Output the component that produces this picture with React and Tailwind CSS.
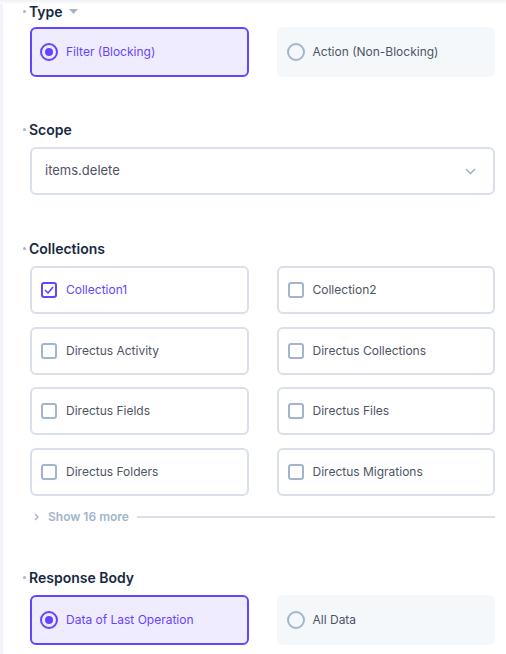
import React from 'react';

const Label = ({ children, caret }) => (
    <div className="flex items-center h-5 text-[14px] font-semibold text-[#172940]">
        <span className="w-[3px] h-[3px] rounded-full bg-[#a2b5cd] mr-[3px] -ml-[7px]"></span>
        {children}
        {caret && (
            <svg className="ml-[6px]" width="9" height="5" viewBox="0 0 9 5">
                <path d="M0 0h9L4.5 5z" fill="#a2b5cd" />
            </svg>
        )}
    </div>
);

const Radio = ({ label, active }) => (
    <div
        className={
            active
                ? 'flex items-center h-[50px] px-[8px] rounded-md border-2 border-[#6644ff] bg-[#f0ecff] text-[#6644ff]'
                : 'flex items-center h-[50px] px-[10px] rounded-md bg-[#f5f8fb] text-[#4f5464]'
        }
    >
        {active ? (
            <span className="w-[18px] h-[18px] rounded-full border-2 border-[#6644ff] flex items-center justify-center">
                <span className="w-[8px] h-[8px] rounded-full bg-[#6644ff]"></span>
            </span>
        ) : (
            <span className="w-[18px] h-[18px] rounded-full border-2 border-[#a2b5cd]"></span>
        )}
        <span className="ml-[8px] text-[12px]">{label}</span>
    </div>
);

const Check = ({ label, active }) => (
    <div className="flex items-center h-[48px] px-[9px] rounded-md border-2 border-[#d9e0ea] bg-white">
        {active ? (
            <span className="w-[16px] h-[16px] rounded-[3px] border-2 border-[#6644ff] flex items-center justify-center">
                <svg width="10" height="8" viewBox="0 0 10 8">
                    <path d="M1 4l3 3 5-6" fill="none" stroke="#6644ff" strokeWidth="1.6" />
                </svg>
            </span>
        ) : (
            <span className="w-[16px] h-[16px] rounded-[3px] border-2 border-[#a2b5cd]"></span>
        )}
        <span className={'ml-[9px] text-[12px] ' + (active ? 'text-[#6644ff]' : 'text-[#4f5464]')}>{label}</span>
    </div>
);

const collections = [
    ['Collection1', true],
    ['Collection2', false],
    ['Directus Activity', false],
    ['Directus Collections', false],
    ['Directus Fields', false],
    ['Directus Files', false],
    ['Directus Folders', false],
    ['Directus Migrations', false],
];

export default function App() {
    return (
        <div
            className="relative w-[506px] h-[654px] overflow-hidden bg-white flex"
            style={{ fontFamily: 'Inter, "Noto Sans", sans-serif' }}
        >
            {/* top shadow */}
            <div className="absolute top-0 left-0 right-0 h-[4px] bg-gradient-to-b from-[#eef1f5] to-white"></div>
            {/* left strip */}
            <div className="w-[3px] bg-[#f0f4f9] shrink-0"></div>

            <div className="flex-1 pl-[27px] pr-[11px] pt-[1px]">
                {/* Type */}
                <Label caret>Type</Label>
                <div className="mt-[6px] grid grid-cols-2 gap-x-[28px]">
                    <Radio label="Filter (Blocking)" active />
                    <Radio label="Action (Non-Blocking)" />
                </div>

                {/* Scope */}
                <div className="mt-[42px]">
                    <Label>Scope</Label>
                    <div className="mt-[8px] h-[48px] flex items-center justify-between px-[13px] rounded-md border-2 border-[#d9e0ea]">
                        <span className="text-[13px] text-[#4f5464]">items.delete</span>
                        <svg className="mr-[4px]" width="11" height="7" viewBox="0 0 11 7">
                            <path d="M1 1l4.5 4.5L10 1" fill="none" stroke="#a2b5cd" strokeWidth="1.6" />
                        </svg>
                    </div>
                </div>

                {/* Collections */}
                <div className="mt-[43px]">
                    <Label>Collections</Label>
                    <div className="mt-[8px] grid grid-cols-2 gap-x-[28px] gap-y-[12.5px]">
                        {collections.map(([name, on]) => (
                            <Check key={name} label={name} active={on} />
                        ))}
                    </div>
                    <div className="mt-[11px] h-5 flex items-center">
                        <svg className="ml-[4px]" width="5" height="8" viewBox="0 0 5 8">
                            <path d="M1 1l3 3-3 3" fill="none" stroke="#a2b5cd" strokeWidth="1.4" />
                        </svg>
                        <span className="ml-[9px] text-[12px] font-semibold text-[#a2b5cd]">Show 16 more</span>
                        <div className="flex-1 ml-[8px] h-[2px] bg-[#d9e0ea]"></div>
                    </div>
                </div>

                {/* Response Body */}
                <div className="mt-[41px]">
                    <Label>Response Body</Label>
                    <div className="mt-[7px] grid grid-cols-2 gap-x-[28px]">
                        <Radio label="Data of Last Operation" active />
                        <Radio label="All Data" />
                    </div>
                </div>
            </div>
        </div>
    );
}
